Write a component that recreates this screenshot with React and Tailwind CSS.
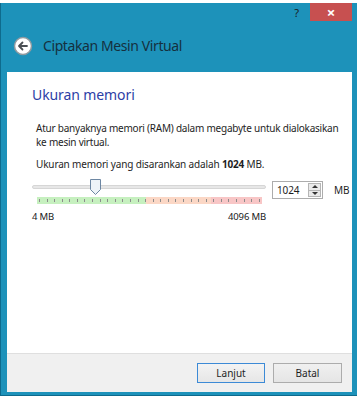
import React from 'react';

const font = { fontFamily: '"Noto Sans", "Open Sans", sans-serif' };

const BackIcon = () => (
    <svg width="20" height="20" viewBox="0 0 20 20">
        <circle cx="10" cy="10" r="8.5" fill="#ffffff" stroke="#8f9aa0" strokeWidth="1.5" />
        <path d="M14 10H6.5M9.5 6.5L6 10l3.5 3.5" fill="none" stroke="#4a4f54" strokeWidth="1.8" strokeLinecap="round" strokeLinejoin="round" />
    </svg>
);

const Thumb = () => (
    <svg width="11" height="16" viewBox="0 0 11 16" className="absolute left-[58px] top-[-1px]">
        <path d="M0.5 0.5H10.5V10.5L5.5 15.5L0.5 10.5Z" fill="#eef3f8" stroke="#6d87a3" />
    </svg>
);

const ticks = Array.from({ length: 30 }, (_, i) => i);

const Slider = () => (
    <div className="w-[234px]">
        <div className="relative h-[16px]">
            <div className="absolute left-0 right-0 top-[5px] h-[4px] rounded-sm bg-[#e7e7e7] border border-[#d6d6d6]" />
            <Thumb />
        </div>
        <div className="relative mt-[1px] ml-[5px] flex h-[7px] w-[225px]">
            <div className="w-[109px] bg-[#c6f0bf]" />
            <div className="w-[65px] bg-[#fbd7c5]" />
            <div className="flex-1 bg-[#f8c6c6]" />
            <div className="absolute inset-x-[2px] top-[2px] flex justify-between">
                {ticks.map(i => (
                    <div key={i} className="h-[3px] w-px bg-[#8c8c8c]" />
                ))}
            </div>
        </div>
        <div className="mt-[7px] flex justify-between text-[9.5px] leading-[12px] tracking-[-0.15px] text-[#202020]">
            <span>4 MB</span>
            <span>4096 MB</span>
        </div>
    </div>
);

const SpinBox = () => (
    <div className="flex h-[18px] w-[51px] items-stretch border border-[#acacac] bg-white">
        <span className="flex-1 pl-[4px] text-[10px] leading-[16px] tracking-[-0.15px] text-[#1e1e1e]">1024</span>
        <div className="my-[1px] mr-[1px] flex w-[13px] flex-col border border-[#b5b5b5] bg-[#eaeaea]">
            <div className="flex flex-1 items-center justify-center border-b border-[#b5b5b5]">
                <div className="h-0 w-0 border-x-[3px] border-b-[3px] border-x-transparent border-b-[#333]" />
            </div>
            <div className="flex flex-1 items-center justify-center">
                <div className="h-0 w-0 border-x-[3px] border-t-[3px] border-x-transparent border-t-[#333]" />
            </div>
        </div>
    </div>
);

export default function App() {
    return (
        <div className="h-[400px] w-[360px] overflow-hidden bg-white pt-[3px]" style={font}>
            <div className="flex h-[393px] w-[357px] flex-col border-l border-b border-[#0e6b8d] bg-[#1d92ba]">
                <div className="flex h-[18px] items-start justify-end pr-[5px]">
                    <span className="mr-[11px] mt-[4px] text-[11px] leading-[12px] text-[#1a1a1a]">?</span>
                    <div className="flex h-[18px] w-[42px] items-center justify-center bg-[#c75050] text-[15px] font-bold leading-none text-white">
                        ×
                    </div>
                </div>
                <div className="flex h-[51px] items-center pl-[12px] pb-[2px]">
                    <BackIcon />
                    <span className="ml-[10px] text-[14px] leading-[18px] tracking-[-0.4px] text-[#15303e]">Ciptakan Mesin Virtual</span>
                </div>
                <div className="ml-[6px] mr-[5px] flex flex-1 flex-col">
                    <div className="flex-1 bg-white pl-[25px] pt-[14px]">
                        <h2 className="text-[14px] leading-[18px] tracking-[-0.1px] text-[#2d3ea6]">Ukuran memori</h2>
                        <p className="mt-[17px] ml-[4px] text-[10px] leading-[14px] tracking-[-0.23px] text-[#1e1e1e]">
                            Atur banyaknya memori (RAM) dalam megabyte untuk dialokasikan
                            <br />
                            ke mesin virtual.
                        </p>
                        <p className="mt-[8px] ml-[4px] text-[10px] leading-[14px] tracking-[-0.15px] text-[#1e1e1e]">
                            Ukuran memori yang disarankan adalah <b>1024</b> MB.
                        </p>
                        <div className="mt-[9px] flex items-start">
                            <Slider />
                            <div className="ml-[6px] mt-[1px]">
                                <SpinBox />
                            </div>
                            <span className="ml-[11px] mt-[3px] text-[10px] leading-[14px] tracking-[-0.15px] text-[#1e1e1e]">MB</span>
                        </div>
                    </div>
                    <div className="flex h-[39px] items-center justify-end gap-[8px] border-t border-[#dfdfdf] bg-[#f0f0f0] pr-[10px]">
                        <button className="h-[20px] w-[68px] border border-[#3c8ad6] bg-gradient-to-b from-[#f3f3f3] to-[#e6e6e6] text-[10px] text-[#1e1e1e]">
                            Lanjut
                        </button>
                        <button className="h-[20px] w-[69px] border border-[#acacac] bg-gradient-to-b from-[#f0f0f0] to-[#e5e5e5] text-[10px] text-[#1e1e1e]">
                            Batal
                        </button>
                    </div>
                </div>
                <div className="h-[3px]" />
            </div>
        </div>
    );
}
